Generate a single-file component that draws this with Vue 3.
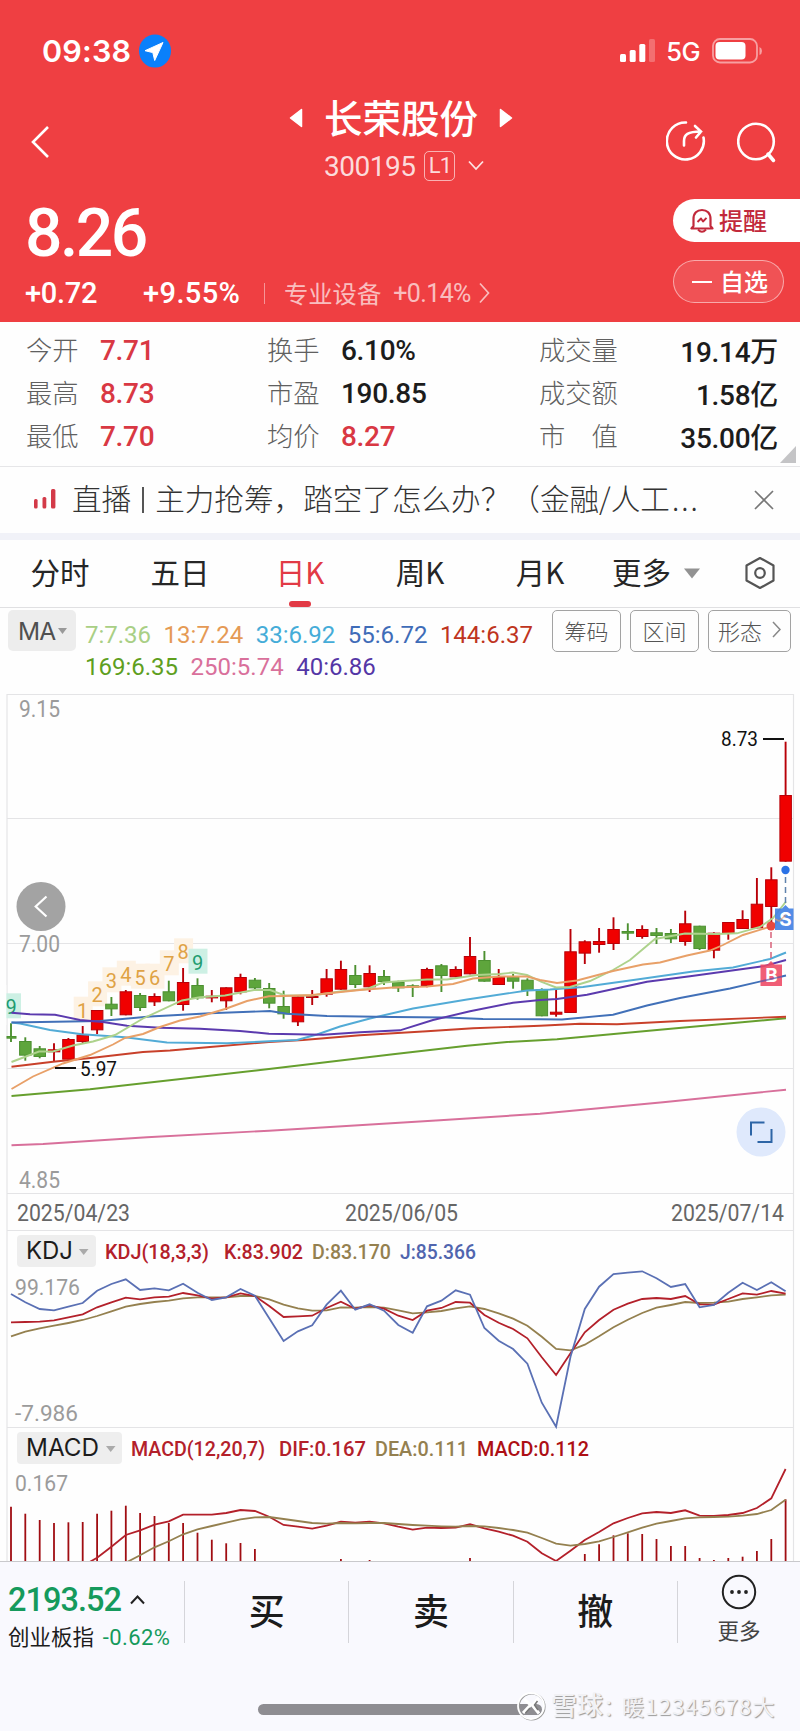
<script setup>
import { ref } from 'vue'

const activeTab = ref('日K')
const tabs = ['分时', '五日', '日K', '周K', '月K']

const stats = [
  { label: '今开', value: '7.71', up: true },
  { label: '换手', value: '6.10%' },
  { label: '成交量', value: '19.14万' },
  { label: '最高', value: '8.73', up: true },
  { label: '市盈', value: '190.85' },
  { label: '成交额', value: '1.58亿' },
  { label: '最低', value: '7.70', up: true },
  { label: '均价', value: '8.27', up: true },
  { label: '市　值', value: '35.00亿' },
]

const maRows = [
  [
    { text: '7:7.36', color: '#a9cf85' },
    { text: '13:7.24', color: '#e59a55' },
    { text: '33:6.92', color: '#45acd8' },
    { text: '55:6.72', color: '#3f6cb8' },
    { text: '144:6.37', color: '#bf3420' },
  ],
  [
    { text: '169:6.35', color: '#5f9f1e' },
    { text: '250:5.74', color: '#d9709b' },
    { text: '40:6.86', color: '#5436a6' },
  ],
]

const tools = ['筹码', '区间']

// one column per trading day
const x = (i) => +(11 + 14.345 * i).toFixed(1)
// @3x offset inside a pane -> chart y
const y = (top, v) => +(top + v / 3).toFixed(1)
const series = (top, start, values) =>
  values.map((v, i) => x(start + i) + ',' + y(top, v)).join(' ')

// [colour, high, body top, body bottom, low]
const candles = [
  ['g', 370, 408, 416, 426], ['g', 412, 423, 467, 482], ['g', 438, 445, 471, 475],
  ['r', 430, 448, 457, 484], ['r', 414, 417, 479, 479], ['r', 378, 404, 426, 430],
  ['r', 330, 330, 391, 402], ['g', 291, 311, 328, 348], ['r', 270, 274, 346, 346],
  ['g', 279, 285, 324, 333], ['r', 280, 288, 307, 318], ['g', 242, 274, 304, 304],
  ['r', 204, 246, 315, 332], ['g', 235, 255, 295, 299], ['r', 270, 287, 295, 307],
  ['r', 262, 262, 304, 330], ['r', 221, 231, 277, 283], ['g', 234, 239, 265, 267],
  ['g', 249, 264, 311, 325], ['g', 272, 318, 343, 356], ['r', 285, 289, 367, 378],
  ['r', 270, 288, 294, 315], ['r', 207, 235, 284, 290], ['r', 182, 207, 269, 269],
  ['g', 195, 225, 255, 264], ['r', 196, 219, 262, 276], ['g', 210, 228, 246, 255],
  ['g', 242, 246, 265, 276], ['g', 253, 256, 263, 291], ['r', 203, 207, 258, 262],
  ['g', 192, 196, 228, 276], ['r', 199, 207, 232, 232], ['r', 111, 168, 223, 223],
  ['g', 153, 180, 245, 245], ['r', 207, 231, 255, 255], ['g', 222, 230, 245, 266],
  ['g', 235, 239, 273, 288], ['g', 265, 268, 349, 349], ['r', 270, 335, 344, 350],
  ['r', 87, 154, 339, 339], ['r', 121, 124, 161, 192], ['r', 84, 123, 135, 158],
  ['r', 52, 87, 132, 150], ['g', 70, 93, 101, 120], ['r', 76, 87, 111, 116],
  ['g', 84, 97, 108, 132], ['g', 87, 99, 118, 129], ['r', 32, 70, 126, 137],
  ['g', 77, 77, 147, 150], ['r', 97, 98, 152, 175], ['r', 66, 66, 102, 119],
  ['r', 31, 57, 87, 87], ['r', -66, 11, 85, 85], ['r', -98, -62, 21, 70],
  ['r', -475, -315, -115, -115],
]

const maLines = [
  { color: '#d8709b', points: '11.5,1145.3 43,1144 147,1137.3 269,1130.7 440,1120.3 540,1113.7 663,1102.3 786,1089.7' },
  { color: '#669f2e', points: '11.5,1096 90,1089.3 269,1069 393,1054.3 467,1045.7 507,1042 540,1040.3 557,1039.3 657,1030 786,1018.3' },
  { color: '#c8402a', points: '11.5,1066.7 53,1061.7 93,1057.7 143,1052 170,1050.5 210,1047 269,1042 303,1040 360,1035.3 427,1031.3 473,1028.3 540,1025.7 580,1023.7 617,1024.3 680,1021 786,1016.7' },
  { color: '#52abd6', points: '11.5,1022.5 20,1023.5 50,1030 82,1034.3 125,1037.3 167,1042.5 227,1043.3 269,1041.3 297,1040 317,1034.5 340,1026.5 370,1018.5 413,1008.5 467,999.5 527,990.5 550,989.5 583,987 637,979.5 693,971.5 733,967.5 770,959 786,952.5' },
  { color: '#4170b8', points: '11.5,1022.5 100,1021 150,1016.5 210,1013.3 270,1011 287,1013.7 327,1016 393,1017 447,1017.5 483,1019 540,1019.3 562,1019.5 613,1014.7 647,1005.5 680,998 730,988.5 786,975.5' },
  { color: '#5b3aae', points: '11.5,1012.7 30,1014.3 55,1014.7 80,1020 103,1022 127,1025.7 160,1027.7 200,1028.7 240,1031 269,1033.7 323,1034.7 360,1032.3 400,1030.3 433,1020 470,1011.3 513,1002.7 540,1000 557,999 587,994.7 647,981.7 690,976.3 763,966.3 786,960' },
  { color: '#add28c', points: '11.5,1062 39,1051.5 53,1051.5 73,1045.5 93,1041.5 115,1035 143,1018.5 182,1000.5 200,997.3 225,995.5 254,990 270,990 285,995.5 312,995.5 340,991.5 367,989 383,982.5 403,981 427,979.5 447,979.5 477,975 500,974 513,972.5 527,975 541,981.7 556,987.5 570,987 590,981 613,970 630,960 655,939 685,933.5 717,934 737,933.3 760,927 773,918 786,901.5' },
  { color: '#e8a068', points: '11.5,1089 33,1076.5 63,1063.5 90,1055 113,1044.5 125,1038 143,1034 160,1027 180,1020.5 200,1016.5 225,1009 247,1001 269,996.3 285,996 312,995 360,990 393,987.5 427,986.5 453,984 473,978.5 500,976.5 527,976.5 540,980 557,983 577,980.5 613,971 643,964.5 660,962.5 687,955.5 710,950.5 723,945 743,935 771,926.5 786,915' },
]

const counts = [
  { n: 9, i: 0, v: 322, green: true },
  { n: 1, i: 5, v: 332 }, { n: 2, i: 6, v: 286 }, { n: 3, i: 7, v: 244 },
  { n: 4, i: 8, v: 224 }, { n: 5, i: 9, v: 233 }, { n: 6, i: 10, v: 233 },
  { n: 7, i: 11, v: 193 }, { n: 8, i: 12, v: 157 },
  { n: 9, i: 13, v: 188, green: true },
]

const lowerLines = [
  { color: '#94804f', points: series(1260, 0, [229, 215, 205, 197, 189, 180, 168, 154, 140, 132, 126, 122, 115, 112, 112, 112, 108, 108, 118, 134, 145, 152, 151, 142, 143, 141, 143, 151, 160, 157, 153, 145, 139, 147, 160, 176, 197, 230, 267, 271, 254, 229, 202, 179, 159, 143, 135, 126, 129, 128, 125, 117, 112, 106, 104]) },
  { color: '#b3202a', points: series(1260, 0, [187, 186, 185, 181, 172, 163, 142, 127, 113, 118, 112, 110, 99, 106, 116, 112, 100, 108, 138, 171, 169, 167, 144, 125, 146, 136, 146, 167, 180, 152, 144, 126, 128, 165, 188, 207, 235, 292, 345, 280, 217, 180, 149, 131, 117, 114, 117, 108, 133, 134, 117, 100, 104, 93, 101]) },
  { color: '#5a70b4', points: series(1260, 0, [102, 127, 147, 151, 140, 129, 92, 72, 58, 90, 85, 91, 71, 98, 120, 112, 87, 107, 175, 243, 214, 196, 134, 92, 149, 133, 152, 195, 218, 139, 122, 91, 104, 204, 242, 267, 311, 428, 500, 290, 147, 80, 42, 38, 34, 55, 81, 72, 142, 135, 98, 68, 90, 67, 94]) },
  { color: '#b3202a', points: series(1260, 5, [918, 893, 860, 825, 811, 794, 784, 764, 764, 764, 759, 750, 753, 770, 795, 800, 806, 797, 785, 788, 785, 790, 800, 809, 803, 804, 803, 793, 805, 815, 827, 845, 880, 903, 872, 840, 816, 790, 774, 760, 756, 759, 751, 767, 768, 765, 759, 744, 715, 627]) },
  { color: '#94804f', points: series(1260, 8, [908, 886, 862, 844, 823, 808, 798, 788, 778, 772, 771, 777, 783, 789, 791, 789, 790, 789, 789, 792, 795, 797, 799, 800, 798, 799, 804, 810, 818, 834, 851, 857, 852, 844, 831, 817, 803, 791, 783, 775, 772, 771, 770, 767, 762, 750, 719]) },
]

// MACD histogram tops, null where the bar is below the visible part
const bars = [
  740, 761, 780, 789, 787, 786, 761, 752, 737, 759, 768, 789, 789, 818, 839, 850, 849, 867,
  null, null, null, null, null, 897, null, 900, null, null, null, null, null, null, 894,
  null, null, null, null, null, null, null, 882, 853, 826, 820, 822, 837, 858, 858, 894, 900,
  894, 890, 873, 837, 718,
]

const labels = [
  { t: '9.15', x: 19, y: 717, w: 41, s: 23, c: '#9b9b9b' },
  { t: '7.00', x: 19, y: 952, w: 41, s: 23, c: '#9b9b9b' },
  { t: '4.85', x: 19, y: 1188, w: 41, s: 23, c: '#9b9b9b' },
  { t: '2025/04/23', x: 17, y: 1221, w: 113, s: 23, c: '#666' },
  { t: '2025/06/05', x: 345, y: 1221, w: 113, s: 23, c: '#666' },
  { t: '2025/07/14', x: 671, y: 1221, w: 113, s: 23, c: '#666' },
  { t: 'KDJ(18,3,3)', x: 105, y: 1259, w: 104, s: 20.5, c: '#b3202a', b: 1 },
  { t: 'K:83.902', x: 224, y: 1259, w: 79, s: 20.5, c: '#b3202a', b: 1 },
  { t: 'D:83.170', x: 312, y: 1259, w: 79, s: 20.5, c: '#94804f', b: 1 },
  { t: 'J:85.366', x: 400, y: 1259, w: 76, s: 20.5, c: '#5065ae', b: 1 },
  { t: '99.176', x: 15, y: 1295, w: 65, s: 22, c: '#9b9b9b' },
  { t: '-7.986', x: 15, y: 1421, w: 63, s: 22, c: '#9b9b9b' },
  { t: 'MACD(12,20,7)', x: 131, y: 1456, w: 134, s: 20.5, c: '#b3202a', b: 1 },
  { t: 'DIF:0.167', x: 279, y: 1456, w: 87, s: 20.5, c: '#b3202a', b: 1 },
  { t: 'DEA:0.111', x: 375, y: 1456, w: 93, s: 20.5, c: '#94804f', b: 1 },
  { t: 'MACD:0.112', x: 477, y: 1456, w: 112, s: 20.5, c: '#ad0f14', b: 1 },
  { t: '0.167', x: 15, y: 1491, w: 53, s: 22, c: '#9b9b9b' },
  { t: '8.73', x: 721, y: 746, w: 37, s: 20, c: '#111' },
  { t: '5.97', x: 80, y: 1076, w: 37, s: 20, c: '#111' },
]

const actions = ['买', '卖', '撤']
</script>

<template>
  <div class="screen">
    <header class="head">
      <div class="status">
        <span class="clock">09:38</span>
        <svg class="locate" width="32" height="34" viewBox="0 0 32 34">
          <ellipse cx="16" cy="17" rx="16" ry="16.5" fill="#0a80fb" />
          <path d="M24 8.500L15.700 26.500L13.800 18.600L6 16.700Z" fill="#fff" stroke="#fff" stroke-linejoin="round" />
        </svg>
        <svg class="signal" width="36" height="24" viewBox="0 0 36 24" fill="#fff">
          <rect x="0" y="15" width="6" height="8" rx="1.500" />
          <rect x="9.700" y="11" width="6" height="12" rx="1.500" />
          <rect x="19.300" y="5" width="6" height="18" rx="1.500" />
          <rect x="29" y="0" width="6" height="23" rx="1.500" opacity=".25" />
        </svg>
        <span class="net">5G</span>
        <svg class="battery" width="51" height="26" viewBox="0 0 51 26">
          <rect x="1" y="1" width="44" height="23.500" rx="7" fill="none" stroke="#fff" stroke-opacity=".5" stroke-width="1.800" />
          <rect x="3.500" y="4" width="30" height="17.500" rx="4" fill="#fff" />
          <path d="M47.500 9v8q2.500-1 2.500-4t-2.500-4z" fill="#fff" opacity=".5" />
        </svg>
      </div>

      <div class="titlebar">
        <svg class="back" width="20" height="34" viewBox="0 0 20 34"><path d="M18 2L3 17L18 32" fill="none" stroke="#fff" stroke-width="2.600" /></svg>
        <div class="title">
          <div class="name">
            <svg width="14" height="20" viewBox="0 0 14 20"><path d="M12.500 1.500v17L1.500 10z" fill="#fff" stroke="#fff" stroke-width="1.500" stroke-linejoin="round" /></svg>
            <h1>长荣股份</h1>
            <svg width="14" height="20" viewBox="0 0 14 20"><path d="M1.500 1.500v17L12.500 10z" fill="#fff" stroke="#fff" stroke-width="1.500" stroke-linejoin="round" /></svg>
          </div>
          <div class="code">
            <span>300195</span>
            <i>L1</i>
            <svg width="16" height="12" viewBox="0 0 16 12"><path d="M1 1.500L8 9L15 1.500" fill="none" stroke="#fff" stroke-opacity=".85" stroke-width="1.800" /></svg>
          </div>
        </div>
        <div class="icons">
          <svg width="40" height="40" viewBox="0 0 40 40" fill="none" stroke="#fff" stroke-width="2.600" stroke-linecap="round">
            <path d="M20 1.500A18.500 18.500 0 1 0 37.500 16.500" />
            <path d="M18 24.500V20C18 13.500 21.500 10.500 35 10.500M29 5L35 10.500L30 16.500" />
          </svg>
          <svg width="40" height="42" viewBox="0 0 40 42" fill="none" stroke="#fff" stroke-width="2.600" stroke-linecap="round">
            <circle cx="19" cy="20.500" r="17.800" />
            <path d="M31 33L36.500 39.500" stroke-width="3.500" />
          </svg>
        </div>
      </div>

      <div class="quote">
        <div class="left">
          <div class="price">8.26</div>
          <div class="change">
            <span class="diff">+0.72</span>
            <span class="pct">+9.55%</span>
            <span class="bar"></span>
            <span class="sector">专业设备</span>
            <span class="sector-pct">+0.14%</span>
            <svg width="11" height="22" viewBox="0 0 11 22"><path d="M1 1.500L9.500 11L1 20.500" fill="none" stroke="#fff" stroke-opacity=".65" stroke-width="1.700" /></svg>
          </div>
        </div>
        <div class="right">
          <div class="remind">
            <svg width="24" height="26" viewBox="0 0 24 26" fill="none" stroke="#c2293b" stroke-width="2.200" stroke-linejoin="round">
              <path d="M1.500 20.500H22.500L20.500 18V11C20.500 5 17 2 12 2S3.500 5 3.500 11V18Z" />
              <path d="M8 21.500Q12 26 16 21.500M7.500 14L11 10.500L13 13.500L16.500 9.800" stroke-width="1.900" />
            </svg>
            <span>提醒</span>
          </div>
          <div class="watch"><b></b><span>自选</span></div>
        </div>
      </div>
    </header>

    <section class="stats">
      <div v-for="s in stats" :key="s.label" class="stat">
        <span class="label">{{ s.label }}</span>
        <span class="value" :class="{ up: s.up }">{{ s.value }}</span>
      </div>
      <svg class="corner" width="16" height="17" viewBox="0 0 16 17"><path d="M16 0V17H0Z" fill="#c4c4c6" /></svg>
    </section>

    <section class="news">
      <svg width="24" height="22" viewBox="0 0 24 22" fill="#d33a48">
        <rect x="0" y="10" width="3.600" height="9.500" rx="1.500" />
        <rect x="8.500" y="8" width="3.800" height="11.500" rx="1.500" />
        <rect x="17" y="0" width="4.400" height="19.500" rx="1.500" />
      </svg>
      <span class="headline">直播<em></em>主力抢筹，踏空了怎么办？（金融/人工<small>...</small></span>
      <svg width="20" height="20" viewBox="0 0 20 20"><path d="M1 1L19 19M19 1L1 19" stroke="#777" stroke-width="1.700" /></svg>
    </section>

    <nav class="tabs">
      <button v-for="t in tabs" :key="t" type="button" :class="{ active: activeTab === t }" @click="activeTab = t">{{ t }}</button>
      <span class="more"><span>更多</span><svg width="16" height="11" viewBox="0 0 16 11"><path d="M0 .5H16L8 10.500Z" fill="#929292" /></svg></span>
      <svg class="gear" width="30" height="34" viewBox="0 0 30 34" fill="none" stroke="#555" stroke-width="2.200" stroke-linejoin="round">
        <path d="M15 2L28.500 9.500V24.500L15 32L1.500 24.500V9.500Z" />
        <circle cx="15" cy="17" r="4.800" />
      </svg>
    </nav>

    <section class="ma">
      <div class="ma-badge">MA<svg width="9" height="6" viewBox="0 0 9 6"><path d="M0 0H9L4.500 6Z" fill="#999" /></svg></div>
      <div class="ma-values">
        <div v-for="(row, r) in maRows" :key="r" class="ma-row">
          <span v-for="m in row" :key="m.text" :style="{ color: m.color }">{{ m.text }}</span>
        </div>
      </div>
      <div class="tools">
        <button v-for="t in tools" :key="t" type="button">{{ t }}</button>
        <button type="button" class="shape">形态<svg width="9" height="17" viewBox="0 0 9 17"><path d="M1 1L8 8.500L1 16" fill="none" stroke="#888" stroke-width="1.500" /></svg></button>
      </div>
    </section>

    <svg class="chart" width="800" height="871" viewBox="0 690 800 871">
      <g stroke="#e4e4e6" stroke-width="1.200" fill="none">
        <path d="M7 1561V694.500H793.500V1561" />
        <path d="M7 818.500H793M7 943.500H793M7 1068.500H793M7 1193.500H793M7 1230.500H793M7 1427.500H793" />
      </g>

      <rect v-for="c in counts" :key="'b' + c.i" :x="x(c.i) - 9" :y="y(900, c.v) - 14" width="19" height="25" :fill="c.green ? '#cdf0e4' : '#fdf2e4'" />
      <text v-for="c in counts" :key="'n' + c.i" class="count" :x="x(c.i)" :y="y(900, c.v) + 7" :fill="c.green ? '#1f9c70' : '#dfa245'">{{ c.n }}</text>
      <rect x="0" y="985" width="6.300" height="40" fill="#fefefe" />

      <g v-for="(c, i) in candles" :key="'c' + i" :fill="c[0] === 'r' ? '#f00000' : '#5ea53c'" :stroke="c[0] === 'r' ? '#b80008' : '#4c9030'">
        <path :d="`M${x(i)} ${y(900, c[1])}V${y(900, c[4])}`" stroke-width="1.900" />
        <rect :x="x(i) - (i ? 5.700 : 4)" :y="y(900, c[2]) + 0.5" :width="i ? 11.500 : 9" :height="Math.max((c[3] - c[2]) / 3 - 1, 1)" stroke-width="1" />
      </g>

      <polyline v-for="l in maLines" :key="l.color" :points="l.points" fill="none" :stroke="l.color" stroke-width="1.900" />

      <g fill="none" stroke-width="1.500" stroke-dasharray="6 4">
        <path d="M785.500 877V905" stroke="#5f82ad" />
        <path d="M771 932V962" stroke="#d8627a" />
      </g>
      <circle cx="785.500" cy="870" r="4.200" fill="#2a72e6" />
      <circle cx="771" cy="926" r="4.500" fill="#e84840" />
      <path d="M775 908.500H782L785.500 905L789 908.500H793.500V930H775Z" fill="#3f80e4" fill-opacity=".9" />
      <path d="M760.500 964.500H767.500L771 961L774.500 964.500H782V986H760.500Z" fill="#ee4863" fill-opacity=".88" />
      <text class="mark" x="785.500" y="926">S</text>
      <text class="mark" x="771.500" y="982">B</text>
      <polyline points="775,919 779,921 786,915" fill="none" stroke="#e8a068" stroke-width="1.500" opacity=".6" />
      <path d="M761 981.300L782 976.500" stroke="#5a5fb0" stroke-width="1.700" opacity=".7" />

      <path d="M763 739H784M55 1068H76" stroke="#111" stroke-width="1.800" />

      <circle cx="41" cy="906.500" r="24.500" fill="#a3a3a3" />
      <path d="M46.500 896.500L35.700 906.500L46.500 916.500" fill="none" stroke="#fff" stroke-width="2.200" />
      <circle cx="761" cy="1132" r="24.500" fill="#dfe9fc" />
      <path d="M751 1135.500V1122.500H764.500M757.500 1142H771.500V1129" fill="none" stroke="#2d65a6" stroke-width="2" />

      <rect x="17" y="1235" width="79" height="32" rx="4" fill="#eeeeee" />
      <text class="ind" x="26" y="1258.500" textLength="47" lengthAdjust="spacingAndGlyphs">KDJ</text>
      <path d="M79 1249H88.500L83.700 1255Z" fill="#aaa" />
      <rect x="17" y="1432" width="105" height="32" rx="4" fill="#eeeeee" />
      <text class="ind" x="26" y="1455.500" textLength="73" lengthAdjust="spacingAndGlyphs">MACD</text>
      <path d="M106 1446H115.500L110.700 1452Z" fill="#aaa" />

      <template v-for="(b, i) in bars" :key="'b' + i">
        <path v-if="b" :d="`M${x(i)} ${y(1260, b)}V1561`" stroke="#a00d12" stroke-width="1.800" />
      </template>
      <polyline v-for="(l, i) in lowerLines" :key="'l' + i" :points="l.points" fill="none" :stroke="l.color" stroke-width="1.800" />

      <text
        v-for="l in labels"
        :key="l.t + l.y"
        class="num"
        :x="l.x"
        :y="l.y"
        :fill="l.c"
        :font-size="l.s"
        :font-weight="l.b ? 500 : 400"
        :textLength="l.w"
        lengthAdjust="spacingAndGlyphs"
      >{{ l.t }}</text>
    </svg>

    <footer class="foot">
      <div class="bottom">
        <div class="index">
          <div class="points">2193.52<svg width="15" height="10" viewBox="0 0 15 10"><path d="M1 8.500L7.500 1.500L14 8.500" fill="none" stroke="#222" stroke-width="2" /></svg></div>
          <div class="index-name">创业板指 <span>-0.62%</span></div>
        </div>
        <div v-for="a in actions" :key="a" class="action">{{ a }}</div>
        <div class="action others">
          <svg width="36" height="36" viewBox="0 0 36 36"><circle cx="18" cy="18" r="16.200" fill="none" stroke="#222" stroke-width="2" /><g fill="#222"><circle cx="11" cy="18" r="1.900" /><circle cx="18" cy="18" r="1.900" /><circle cx="25" cy="18" r="1.900" /></g></svg>
          <span>更多</span>
        </div>
      </div>
      <div class="home">
        <span class="pill"></span>
        <div class="stamp">
          <svg width="30" height="30" viewBox="0 0 30 30" fill="none">
            <circle cx="15.700" cy="15.700" r="13" stroke="#999" stroke-width="1.800" />
            <circle cx="15" cy="15" r="13" stroke="#fff" stroke-width="1.800" />
            <path d="M8 8L14.500 14L7 22M22.500 7L16.500 14.500L23 22.500" stroke="#fff" stroke-width="3" />
            <path d="M9.500 22L14 17M21.500 10L18.500 14L22 19" stroke="#777" stroke-width="1.500" />
          </svg>
          <strong>雪球</strong><span>：</span><span class="user">暖12345678大</span>
        </div>
      </div>
    </footer>
  </div>
</template>

<style>
body {
  background: #fefefe;
}
</style>

<style scoped>
* {
  box-sizing: border-box;
}
.screen {
  width: 800px;
  height: 1731px;
  overflow: hidden;
  background: #fefefe;
  font-family: Roboto, "Noto Sans CJK SC", sans-serif;
  color: #1c1c1c;
}
svg {
  display: block;
  flex: none;
}
button {
  appearance: none;
  border: 0;
  background: none;
  padding: 0;
  font: inherit;
  color: inherit;
}

.head {
  height: 322px;
  background: #ef3f42;
  color: #fff;
}
.status {
  display: flex;
  align-items: center;
  height: 68px;
  padding: 34px 37px 0 42px;
}
.clock {
  width: 97px;
  font: 600 30.5px/34px Inter, sans-serif;
  letter-spacing: 0.2px;
}
.signal {
  margin-left: auto;
}
.net {
  margin: 2px 12px 0 10px;
  font: 500 25.5px/30px Inter, sans-serif;
  letter-spacing: -0.5px;
}
.titlebar {
  display: flex;
  align-items: center;
  height: 126px;
  padding: 0 23px 0 30px;
}
.back {
  margin-top: 22px;
}
.title {
  margin: 16px auto 0 239px;
}
.name {
  display: flex;
  align-items: center;
  gap: 21px;
  height: 54px;
}
h1 {
  margin: -5px 0 0;
  font: 500 38.5px/52px "Noto Sans CJK SC", sans-serif;
}
.code {
  display: flex;
  align-items: center;
  padding-left: 35px;
  height: 42px;
  color: rgba(255, 255, 255, 0.82);
  font-size: 28px;
}
.code span {
  letter-spacing: -0.5px;
}
.code i {
  width: 31px;
  height: 30px;
  margin: 0 13px 0 9px;
  border: 1.500px solid rgba(255, 255, 255, 0.6);
  border-radius: 5px;
  font: 400 22px/27px Roboto, sans-serif;
  letter-spacing: -1px;
  text-align: center;
}
.icons {
  display: flex;
  gap: 31px;
  margin-top: 22px;
}
.quote {
  display: flex;
  justify-content: space-between;
  padding-left: 25px;
}
.price {
  margin-top: 10px;
  font-size: 66px;
  line-height: 60px;
  font-weight: 500;
  letter-spacing: -2.500px;
}
.change {
  display: flex;
  align-items: center;
  height: 32px;
  margin-top: 13px;
  font-size: 29px;
  font-weight: 500;
}
.diff {
  width: 72px;
  letter-spacing: -0.3px;
}
.pct {
  width: 100px;
  margin-left: 46px;
  letter-spacing: 0.4px;
}
.bar {
  width: 1px;
  height: 21px;
  margin: 0 19px 0 21px;
  background: rgba(255, 255, 255, 0.45);
}
.sector {
  margin-top: -2px;
  font-size: 24.3px;
  font-weight: 400;
  color: rgba(255, 255, 255, 0.68);
}
.sector-pct {
  margin: 0 8px 0 12px;
  font-size: 25px;
  font-weight: 400;
  letter-spacing: -0.6px;
  color: rgba(255, 255, 255, 0.68);
}
.right {
  display: flex;
  flex-direction: column;
  gap: 18px;
  width: 127px;
  padding-top: 5px;
  font-size: 24px;
  font-weight: 500;
}
.right span {
  margin-top: -3px;
}
.remind {
  display: flex;
  align-items: center;
  gap: 5px;
  height: 43px;
  padding-left: 17px;
  border-radius: 22px 0 0 22px;
  background: #fff;
  color: #c2293b;
}
.watch {
  display: flex;
  align-items: center;
  gap: 8px;
  width: 111px;
  height: 43px;
  padding-left: 18px;
  border: 1px solid rgba(255, 255, 255, 0.5);
  border-radius: 22px;
  background: rgba(255, 255, 255, 0.1);
}
.watch b {
  width: 20px;
  height: 2px;
  background: #fff;
}

.stats {
  position: relative;
  display: grid;
  grid-template-columns: 241px 272px 239px;
  grid-auto-rows: 43px;
  height: 145px;
  padding: 5px 22px 0 26px;
  border-bottom: 1.500px solid #e6e6e8;
}
.stat {
  display: flex;
  align-items: center;
}
.stat .label {
  width: 74px;
  white-space: nowrap;
  font: 300 26.3px/40px "Noto Sans CJK SC", sans-serif;
  color: #606060;
}
.stat .value {
  padding-top: 3px;
  font-size: 28px;
  font-weight: 500;
  letter-spacing: -0.3px;
}
.stat .up {
  color: #d93843;
}
.stat:nth-child(3n) {
  justify-content: space-between;
}
.corner {
  position: absolute;
  right: 4px;
  bottom: 3px;
}

.news {
  display: flex;
  align-items: center;
  height: 66px;
  padding: 0 26px 0 34px;
}
.headline {
  display: flex;
  align-items: center;
  flex: 1;
  margin-top: -4px;
  padding-left: 14px;
  white-space: nowrap;
  font: 300 29.6px/40px "Noto Sans CJK SC", sans-serif;
  color: #333;
}
.headline em {
  width: 2px;
  height: 26px;
  margin: 4px 11px 0;
  background: #555;
}
.headline small {
  margin-left: 2px;
  font-size: 29px;
  letter-spacing: 2px;
}

.tabs {
  display: flex;
  align-items: center;
  height: 75px;
  padding-left: 11px;
  border-top: 7px solid #f1f2f8;
  border-bottom: 1.500px solid #e0e0e2;
  font: 400 29.5px/44px "Noto Sans CJK SC", sans-serif;
  color: #262626;
}
.tabs button {
  position: relative;
  width: 120px;
  height: 67px;
  padding: 0 22px 5px 0;
}
.tabs .active {
  color: #e23a45;
}
.tabs .active::after {
  content: "";
  position: absolute;
  left: 38px;
  bottom: 0;
  width: 22px;
  height: 6px;
  border-radius: 3px;
  background: #e23a45;
}
.more {
  display: flex;
  align-items: center;
  gap: 13px;
  margin: 0 45px 0 1px;
}
.more span {
  margin-top: -5px;
}
.gear {
  margin-top: -2px;
}

.ma {
  display: flex;
  height: 82px;
  padding: 2px 9px 0 8px;
}
.ma-badge {
  display: flex;
  align-items: center;
  gap: 3px;
  width: 68px;
  height: 41px;
  padding-left: 10px;
  border-radius: 5px;
  background: #ededed;
  color: #505050;
  font: 400 24.5px Inter, sans-serif;
  letter-spacing: -1px;
}
.ma-values {
  flex: 1;
  padding: 9px 0 0 9px;
}
.ma-row {
  display: flex;
  gap: 12.5px;
  height: 32px;
  font-size: 24px;
  line-height: 32px;
}
.tools {
  display: flex;
  gap: 9px;
}
.tools button {
  width: 69px;
  height: 42px;
  border: 1.500px solid #a3a3a3;
  border-radius: 5px;
  padding-bottom: 3px;
  font: 300 22px/36px "Noto Sans CJK SC", sans-serif;
  color: #555;
}
.tools .shape {
  display: flex;
  align-items: center;
  justify-content: center;
  gap: 10px;
  width: 83px;
}

.num {
  font-family: Roboto, sans-serif;
}
.count {
  font: 400 20px Roboto, sans-serif;
  text-anchor: middle;
}
.mark {
  font: 700 19px Inter, sans-serif;
  text-anchor: middle;
  fill: #fff;
}
.ind {
  font: 400 24px Inter, sans-serif;
  fill: #1c1c1c;
}

.foot {
  height: 170px;
  border-top: 1.500px solid #c9c9cc;
  background: #f9f9fe;
}
.bottom {
  display: flex;
  height: 96px;
  padding-top: 19px;
}
.index {
  width: 184px;
  padding-left: 8px;
}
.points {
  display: flex;
  align-items: center;
  gap: 9px;
  height: 38px;
  font-size: 32.5px;
  font-weight: 500;
  letter-spacing: -1px;
  color: #159a5c;
}
.index-name {
  white-space: nowrap;
  font: 400 21.5px/34px "Noto Sans CJK SC", sans-serif;
}
.index-name span {
  margin-left: 4px;
  font-family: Roboto, sans-serif;
  font-size: 22px;
  letter-spacing: 0.4px;
  color: #159a5c;
}
.action {
  width: 164.3px;
  height: 62px;
  border-left: 1.500px solid #d5d5da;
  text-align: center;
  font: 500 36px/57px "Noto Sans CJK SC", sans-serif;
}
.others {
  display: flex;
  flex-direction: column;
  align-items: center;
  width: 123px;
  font: 400 21.5px/32px "Noto Sans CJK SC", sans-serif;
  color: #444;
}
.others svg {
  margin: -7px 0 4px;
}
.home {
  position: relative;
  height: 73px;
}
.pill {
  display: block;
  width: 284px;
  height: 11px;
  margin-left: 258px;
  transform: translateY(46px);
  border-radius: 6px;
  background: #8e8d92;
}
.stamp {
  position: absolute;
  left: 516px;
  top: 31px;
  display: flex;
  align-items: center;
  height: 34px;
  white-space: nowrap;
  font: 400 22px/34px "Noto Sans CJK SC", sans-serif;
  color: #f2f2f5;
  text-shadow: 1px 1px 1px #999;
}
.stamp strong {
  margin: -4px 0 0 5px;
  font-size: 26px;
  font-weight: 500;
}
.stamp span {
  width: 19px;
  margin-top: -2px;
}
.user {
  letter-spacing: 1.200px;
}
</style>
